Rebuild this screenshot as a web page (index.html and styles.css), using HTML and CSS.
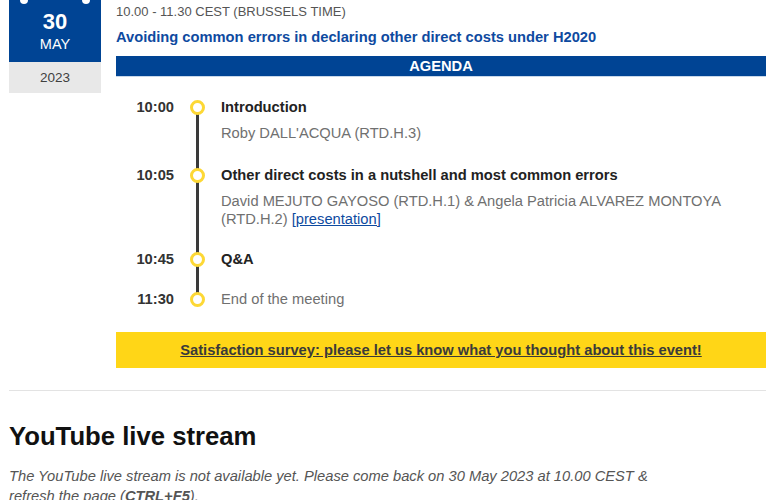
FILE: index.html
```html
<!DOCTYPE html>
<html lang="en">
<head>
<meta charset="utf-8">
<title>Event</title>
<link rel="stylesheet" href="styles.css">
</head>
<body>
<div class="page">
  <div class="event">
    <div class="date">
      <div class="date-top">
        <div class="day">30</div>
        <div class="month">MAY</div>
      </div>
      <div class="year">2023</div>
    </div>
    <div class="details">
      <div class="when">10.00 - 11.30 CEST (BRUSSELS TIME)</div>
      <div class="title">Avoiding common errors in declaring other direct costs under H2020</div>
      <div class="agenda-bar">AGENDA</div>
      <div class="agenda">
        <div class="item item-a">
          <div class="time">10:00</div>
          <div class="track line"><span class="dot"></span></div>
          <div class="content">
            <div class="topic">Introduction</div>
            <div class="speaker">Roby DALL'ACQUA (RTD.H.3)</div>
          </div>
        </div>
        <div class="item item-b">
          <div class="time">10:05</div>
          <div class="track line"><span class="dot"></span></div>
          <div class="content">
            <div class="topic">Other direct costs in a nutshell and most common errors</div>
            <div class="speaker">David MEJUTO GAYOSO (RTD.H.1) &amp; Angela Patricia ALVAREZ MONTOYA (RTD.H.2) <a href="#" class="pres">[presentation]</a></div>
          </div>
        </div>
        <div class="item item-c">
          <div class="time">10:45</div>
          <div class="track line"><span class="dot"></span></div>
          <div class="content">
            <div class="topic">Q&amp;A</div>
          </div>
        </div>
        <div class="item last">
          <div class="time">11:30</div>
          <div class="track"><span class="dot"></span></div>
          <div class="content">
            <div class="topic plain">End of the meeting</div>
          </div>
        </div>
      </div>
      <div class="survey"><a href="#">Satisfaction survey: please let us know what you thought about this event!</a></div>
    </div>
  </div>
  <hr class="divider">
  <h2 class="stream-title">YouTube live stream</h2>
  <p class="stream-text">The YouTube live stream is not available yet. Please come back on 30 May 2023 at 10.00 CEST &amp; refresh the page (<b>CTRL+F5</b>).</p>
</div>
</body>
</html>
```

FILE: styles.css
```css
html, body {
  margin: 0;
  padding: 0;
  background: #ffffff;
}
body {
  font-family: "Liberation Sans", Arial, sans-serif;
  color: #333333;
  overflow: hidden;
}
.page {
  padding: 0 4px 0 9px;
}
.event {
  display: flex;
  gap: 15px;
  align-items: flex-start;
}
.date {
  width: 92px;
  flex: none;
}
.date-top {
  position: relative;
  background: #004494;
  color: #ffffff;
  height: 62px;
  text-align: center;
  box-sizing: border-box;
  padding-top: 10px;
}
.date-top::before,
.date-top::after {
  content: "";
  position: absolute;
  top: -4px;
  width: 8px;
  height: 8px;
  border-radius: 50%;
  background: #ffffff;
}
.date-top::before { left: 11px; }
.date-top::after { right: 11px; }
.day {
  font-size: 22px;
  font-weight: bold;
  line-height: 24px;
}
.month {
  font-size: 14.5px;
  line-height: 18px;
  margin-top: 1px;
}
.year {
  background: #e8e8e8;
  height: 31px;
  line-height: 31px;
  text-align: center;
  font-size: 13.5px;
  color: #404040;
}
.details {
  flex: 1;
  min-width: 0;
}
.when {
  font-size: 13px;
  line-height: 16px;
  padding-top: 4px;
  color: #555555;
}
.title {
  margin-top: 8px;
  font-size: 14.7px;
  font-weight: bold;
  line-height: 18px;
  color: #0e4aa0;
}
.agenda-bar {
  margin-top: 10px;
  background: #004494;
  color: #ffffff;
  font-size: 14.7px;
  font-weight: bold;
  text-align: center;
  height: 20px;
  line-height: 20px;
  border-bottom: 1px solid #c8d8ea;
}
.agenda {
  padding-top: 20px;
}
.item {
  display: grid;
  grid-template-columns: 58px 47px 1fr;
}
.item-a { padding-bottom: 23px; }
.item-b { padding-bottom: 21px; }
.item-c { padding-bottom: 20px; }
.time {
  text-align: right;
  font-size: 14.7px;
  font-weight: bold;
  line-height: 20px;
  color: #333333;
}
.track {
  position: relative;
}
.track.line::before {
  content: "";
  position: absolute;
  left: 22px;
  top: 10px;
  width: 3px;
  background: #3a3a3a;
}
.item-a .track.line::before { bottom: -33px; }
.item-b .track.line::before { bottom: -31px; }
.item-c .track.line::before { bottom: -30px; }
.dot {
  position: absolute;
  left: 16px;
  top: 3px;
  width: 9px;
  height: 9px;
  border: 3px solid #fdd835;
  border-radius: 50%;
  background: #ffffff;
  z-index: 1;
}
.content {
  min-width: 0;
}
.topic {
  font-size: 14.7px;
  font-weight: bold;
  line-height: 20px;
  color: #222222;
}
.topic.plain {
  font-weight: normal;
  color: #707070;
}
.speaker {
  margin-top: 7px;
  font-size: 14.7px;
  line-height: 18px;
  color: #707070;
  padding-right: 30px;
}
.pres {
  color: #0e4aa0;
  text-decoration: underline;
}
.survey {
  margin-top: 23px;
  background: #ffd617;
  height: 36px;
  line-height: 36px;
  text-align: center;
}
.survey a {
  color: #3a3a3a;
  font-size: 14.7px;
  font-weight: bold;
  text-decoration: underline;
}
.divider {
  margin: 22px 0 0 0;
  border: 0;
  height: 1px;
  background: #e3e3e3;
}
.stream-title {
  margin: 31px 0 0 0;
  font-size: 25.7px;
  line-height: 28px;
  font-weight: bold;
  color: #111111;
}
.stream-text {
  margin: 16px 0 0 0;
  width: 660px;
  font-size: 14.7px;
  line-height: 20px;
  font-style: italic;
  color: #555555;
}
```
